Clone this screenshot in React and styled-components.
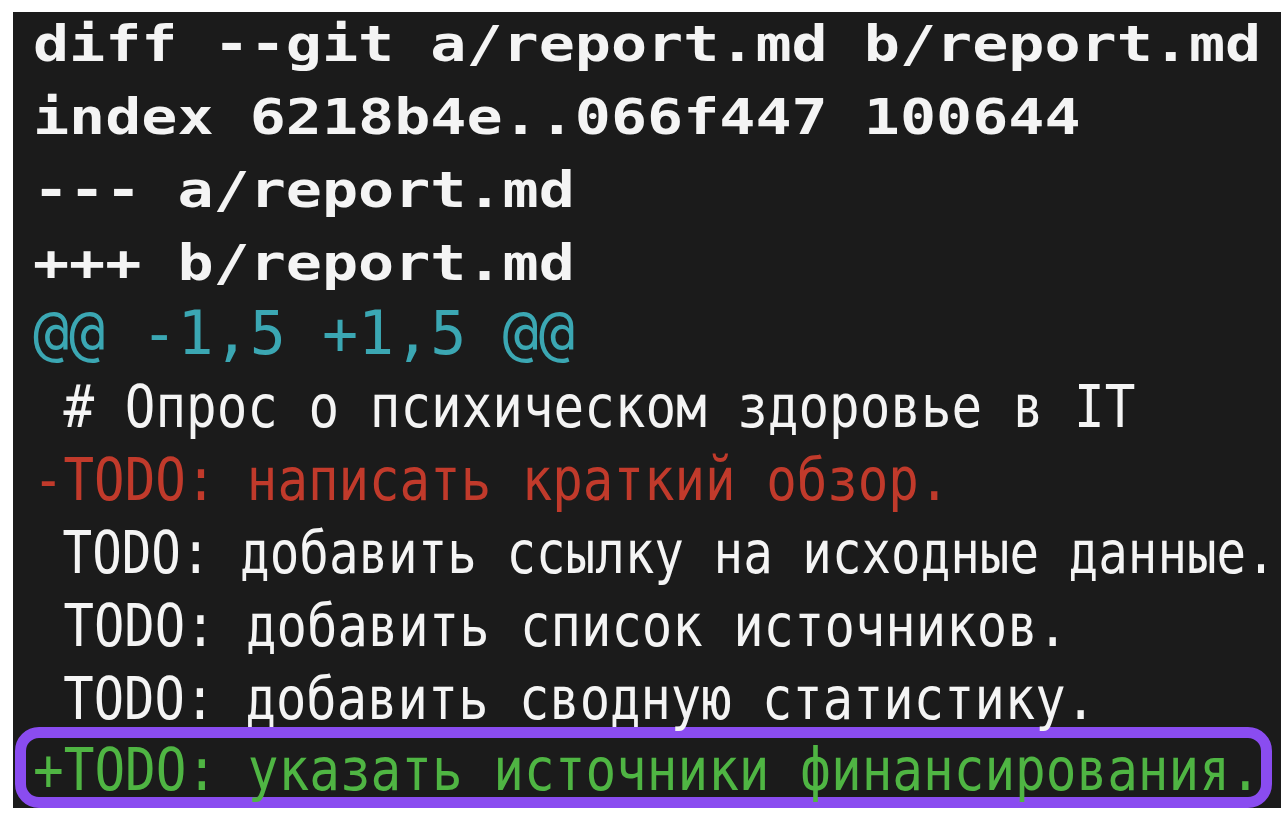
import styled, { createGlobalStyle } from 'styled-components'

const GlobalStyle = createGlobalStyle`
  html, body {
    margin: 0;
    padding: 0;
    background: #ffffff;
    overflow: hidden;
  }
  body {
    width: 1286px;
    height: 816px;
  }
`

const Terminal = styled.div`
  display: flow-root;
  margin: 12px 0 0 13px;
  width: 1268px;
  height: 796px;
  box-sizing: border-box;
  padding-left: 20px;
  background: #1b1b1b;
  overflow: hidden;
  font-family: "DejaVu Sans Mono", "Liberation Mono", monospace;
`

const Lines = styled.div`
  display: flex;
  flex-direction: column;
  margin-top: -4px;
`

const Line = styled.div`
  height: 73px;
  line-height: 73px;
  white-space: pre;
  font-size: ${p => p.$size}px;
  font-weight: ${p => (p.$bold ? 700 : 400)};
  color: ${p => p.$color};
  transform: translateY(${p => p.$dy || 0}px) scaleX(${p => p.$scale});
  transform-origin: left center;
`

const Highlight = styled.div`
  margin: -11px 0 0 -18px;
  width: 1257px;
  height: 81px;
  box-sizing: border-box;
  border: 11px solid #8a4cf0;
  border-radius: 24px;
  padding-left: 7px;
`

const HighlightLine = styled(Line)`
  height: 59px;
  line-height: 55px;
  padding-top: 4px;
  box-sizing: border-box;
`

const WHITE = '#f4f4f4'
const CYAN = '#3ba7b3'
const RED = '#c13a2b'
const GREEN = '#4fb543'

const header = { $size: 50, $bold: true, $scale: 1.2, $color: WHITE }
const text = { $size: 59, $dy: -3 }

const lines = [
  { t: 'diff --git a/report.md b/report.md', ...header },
  { t: 'index 6218b4e..066f447 100644', ...header },
  { t: '--- a/report.md', ...header },
  { t: '+++ b/report.md', ...header },
  { t: '@@ -1,5 +1,5 @@', $size: 60, $scale: 1, $dy: -3, $color: CYAN },
  { t: ' # Опрос о психическом здоровье в IT', ...text, $scale: 0.862, $color: WHITE },
  { t: '-TODO: написать краткий обзор.', ...text, $scale: 0.86, $color: RED },
  { t: ' TODO: добавить ссылку на исходные данные.', ...text, $scale: 0.833, $color: WHITE },
  { t: ' TODO: добавить список источников.', ...text, $scale: 0.857, $color: WHITE },
  { t: ' TODO: добавить сводную статистику.', ...text, $scale: 0.855, $color: WHITE },
]

export default function App() {
  return (
    <>
      <GlobalStyle />
      <Terminal>
        <Lines>
          {lines.map(({ t, ...rest }, i) => (
            <Line key={i} {...rest}>{t}</Line>
          ))}
          <Highlight>
            <HighlightLine $size={59} $scale={0.864} $color={GREEN}>
              +TODO: указать источники финансирования.
            </HighlightLine>
          </Highlight>
        </Lines>
      </Terminal>
    </>
  )
}
